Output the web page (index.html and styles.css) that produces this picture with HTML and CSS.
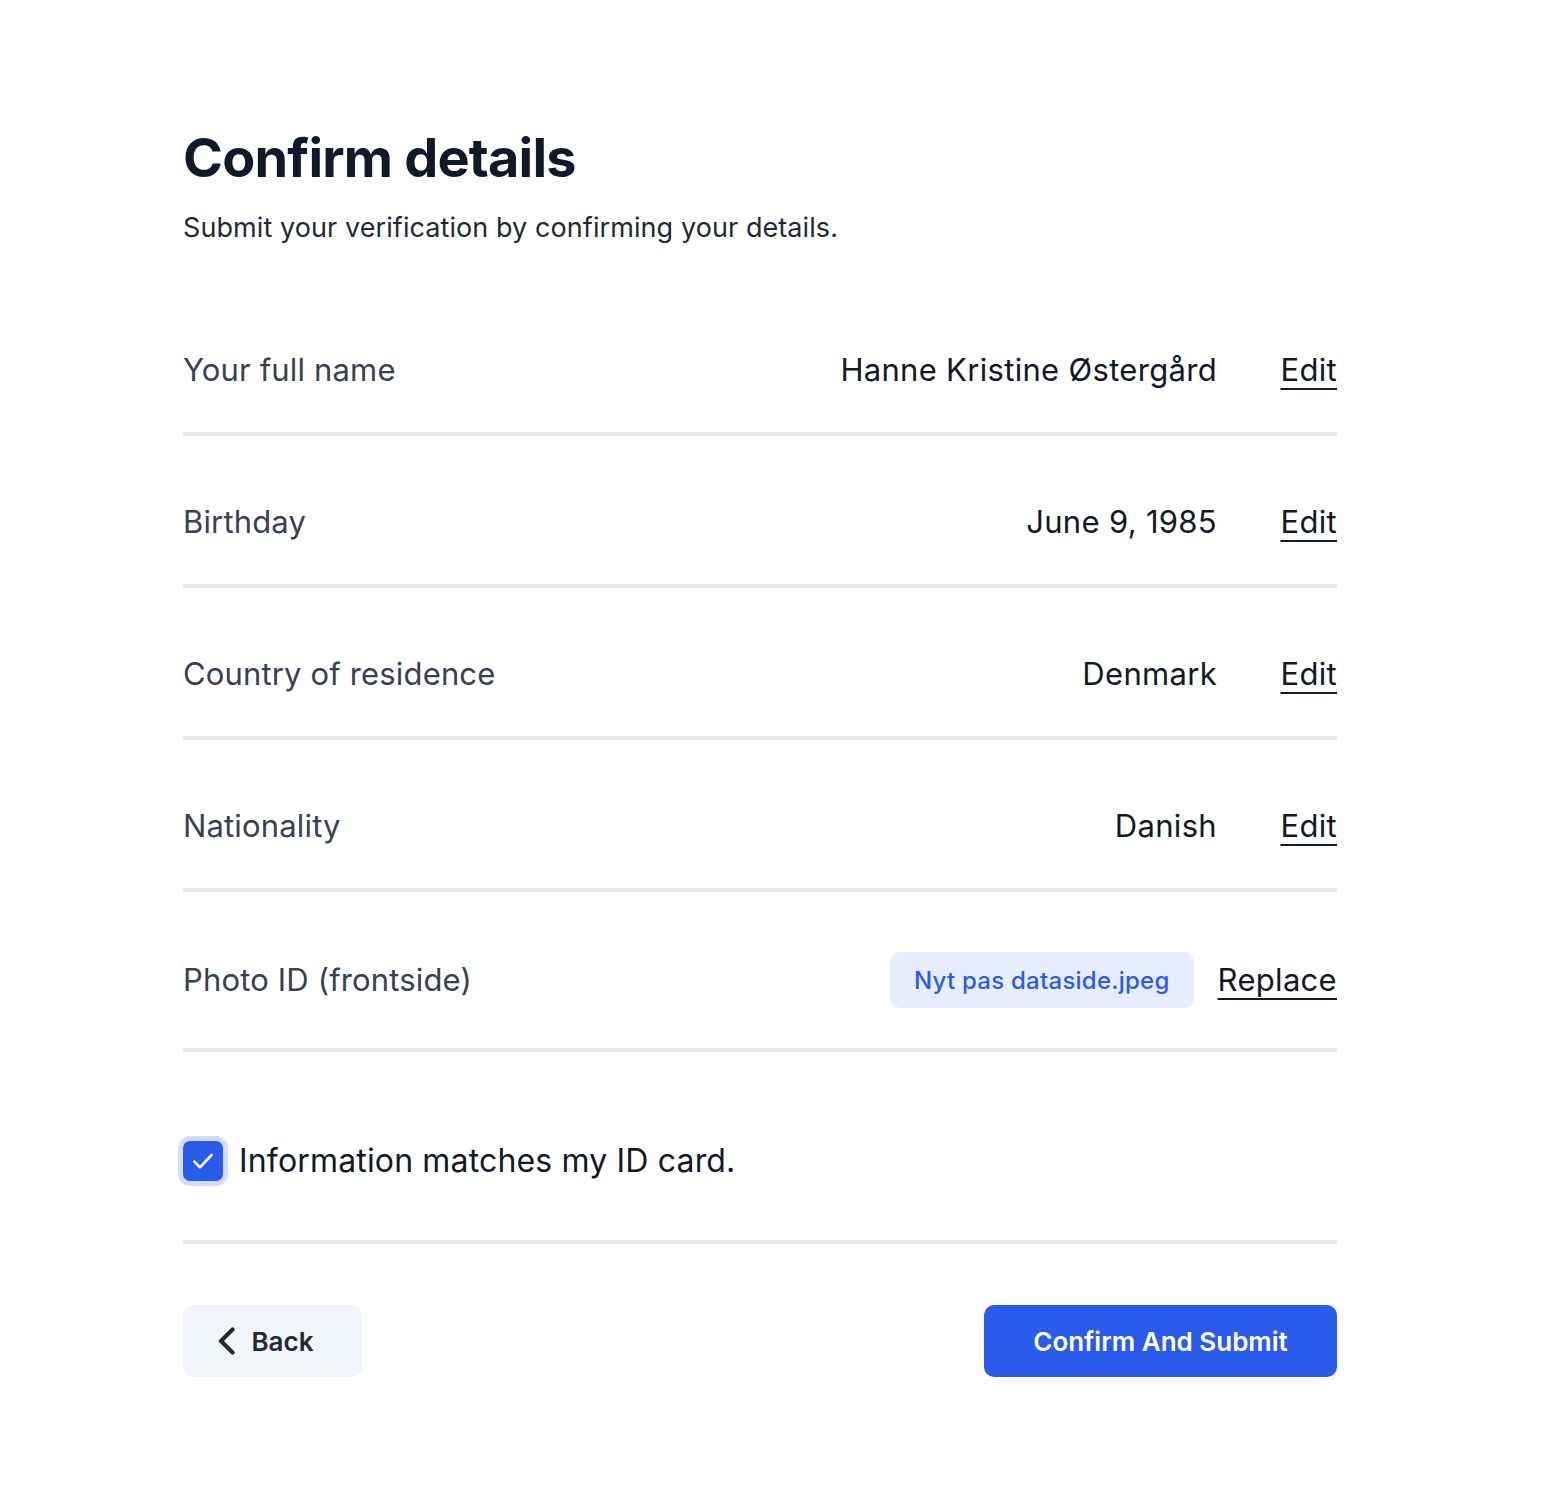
FILE: index.html
```html
<!DOCTYPE html>
<html lang="en">
<head>
<meta charset="utf-8">
<title>Confirm details</title>
<link rel="stylesheet" href="styles.css">
</head>
<body>
<main class="page">
  <header class="intro">
    <h1 class="title">Confirm details</h1>
    <p class="subtitle">Submit your verification by confirming your details.</p>
  </header>

  <section class="details">
    <div class="row">
      <span class="label">Your full name</span>
      <span class="value">Hanne Kristine Østergård</span>
      <a class="action" href="#">Edit</a>
    </div>
    <div class="row">
      <span class="label">Birthday</span>
      <span class="value">June 9, 1985</span>
      <a class="action" href="#">Edit</a>
    </div>
    <div class="row">
      <span class="label">Country of residence</span>
      <span class="value">Denmark</span>
      <a class="action" href="#">Edit</a>
    </div>
    <div class="row">
      <span class="label">Nationality</span>
      <span class="value">Danish</span>
      <a class="action" href="#">Edit</a>
    </div>
    <div class="row row-file">
      <span class="label">Photo ID (frontside)</span>
      <span class="file-badge">Nyt pas dataside.jpeg</span>
      <a class="action" href="#">Replace</a>
    </div>
    <label class="row row-check">
      <span class="checkbox">
        <svg viewBox="0 0 24 24" width="32" height="32" aria-hidden="true"><path d="M5.5 12.5l4.2 4.2L18.5 7.5" fill="none" stroke="#fff" stroke-width="1.9" stroke-linecap="round" stroke-linejoin="round"/></svg>
      </span>
      <span class="check-label">Information matches my ID card.</span>
    </label>
  </section>

  <footer class="actions">
    <button class="btn btn-back" type="button">
      <svg viewBox="0 0 20 28" width="20" height="28" aria-hidden="true"><path d="M15.5 2.5L4 14l11.5 11.5" fill="none" stroke="#1f2937" stroke-width="4.2" stroke-linecap="round" stroke-linejoin="round"/></svg>
      <span>Back</span>
    </button>
    <button class="btn btn-primary" type="button">Confirm And Submit</button>
  </footer>
</main>
</body>
</html>
```

FILE: styles.css
```css
* { box-sizing: border-box; }

body {
  margin: 0;
  background: #ffffff;
  font-family: Inter, "Noto Sans", "Liberation Sans", sans-serif;
  color: #111827;
}

.page {
  width: 1154px;
  margin-left: 183px;
  padding-top: 122px;
  padding-bottom: 100px;
}

.title {
  margin: 0;
  font-size: 54px;
  line-height: 72px;
  font-weight: 700;
  letter-spacing: -0.015em;
  color: #111827;
}

.subtitle {
  margin: 17px 0 0;
  font-size: 27px;
  line-height: 34px;
  color: #1f2937;
  letter-spacing: 0.003em;
}

.details {
  margin-top: 39px;
}

.row {
  display: flex;
  align-items: center;
  gap: 24px;
  min-height: 152px;
  padding: 60px 0 36px;
  border-bottom: 4px solid #e8eaef;
}

.label {
  flex: 1;
  font-size: 31px;
  line-height: 52px;
  color: #374151;
  letter-spacing: 0.005em;
}

.value {
  font-size: 31px;
  line-height: 52px;
  color: #111827;
  letter-spacing: 0.01em;
}

.action {
  min-width: 96px;
  text-align: right;
  font-size: 31px;
  line-height: 52px;
  color: #111827;
  text-decoration: underline;
  text-decoration-thickness: 2px;
  text-underline-offset: 7px;
  letter-spacing: 0.01em;
}

.row-file {
  min-height: 160px;
  padding: 60px 0 40px;
}

.file-badge {
  display: inline-flex;
  align-items: center;
  height: 56px;
  padding: 0 24px;
  border-radius: 10px;
  background: #e6eefd;
  color: #2a5bea;
  font-size: 24px;
  font-weight: 500;
  letter-spacing: 0.01em;
}

.row-check {
  min-height: 192px;
  padding: 83px 0 53px;
  gap: 16px;
  cursor: pointer;
}

.checkbox {
  display: inline-flex;
  align-items: center;
  justify-content: center;
  width: 40px;
  height: 40px;
  border-radius: 7px;
  background: #2a5bea;
  box-shadow: 0 0 0 5px #d4defb;
}

.check-label {
  font-size: 32px;
  line-height: 52px;
  color: #111827;
  letter-spacing: 0.005em;
}

.actions {
  display: flex;
  justify-content: space-between;
  margin-top: 61px;
}

.btn {
  display: inline-flex;
  align-items: center;
  justify-content: center;
  height: 72px;
  border: 0;
  border-radius: 10px;
  font-family: inherit;
  font-size: 26px;
  font-weight: 600;
  cursor: pointer;
}

.btn-back {
  width: 179px;
  gap: 14px;
  padding-right: 20px;
  background: #f1f4f8;
  color: #1f2937;
}

.btn-primary {
  width: 353px;
  background: #2a5bea;
  color: #ffffff;
}
```
